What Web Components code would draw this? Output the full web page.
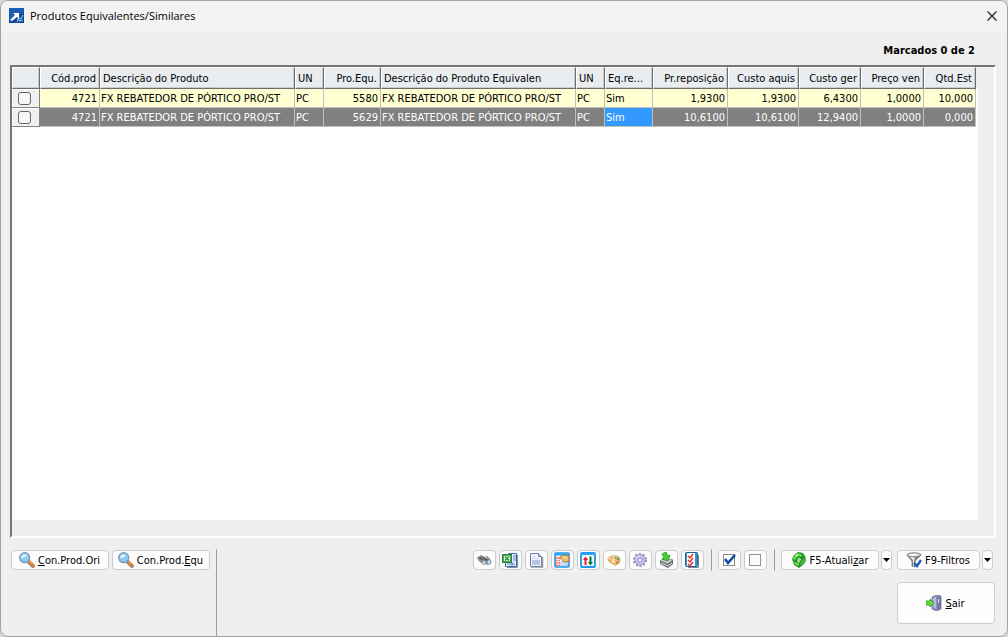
<!DOCTYPE html>
<html lang="pt-BR">
<head>
<meta charset="utf-8">
<title>Produtos Equivalentes/Similares</title>
<style>
html, body { height: 100%; }
body { margin: 0; background: #d6d6d6; font: 11px/14px "DejaVu Sans Condensed", "Noto Sans", sans-serif; color: #000; }
</style>
</head>
<body>
<app-window caption="Produtos Equivalentes/Similares">
  <marked-count slot="status">Marcados 0 de 2</marked-count>
  <product-grid></product-grid>
  <action-bar slot="footer"></action-bar>
</app-window>

<script>
const define = (name, html, setup, observed = []) => {
  const template = document.createElement('template');
  template.innerHTML = html;
  customElements.define(name, class extends HTMLElement {
    static observedAttributes = observed;
    constructor() {
      super();
      this.attachShadow({ mode: 'open' }).append(template.content.cloneNode(true));
    }
    connectedCallback() { if (setup) setup(this, this.shadowRoot); }
    attributeChangedCallback() { setup(this, this.shadowRoot); }
  });
};

const icons = {
  app: `<path d="M0 0h15v15H0z" fill="#0d4a9c"/><path d="M0 0h15v4L0 12z" fill="#1a5cb4"/><path d="M1 12l5-5-2-2h6v6l-2-2-5 4z" fill="#fff"/><path d="M8 14l2-4 2 1 2-4M10 13l4-1M8 11l4 2" stroke="#9cc4ee" fill="none"/>`,
  close: `<path d="M3.500 3.500l9 9M12.500 3.500l-9 9" stroke="#222" stroke-width="1.2" fill="none"/>`,
  lens: `<path d="M10 10l4 4" stroke="#9a8c88" stroke-width="4" stroke-linecap="round"/><path d="M10 9.500l4 4" stroke="#ee7a1c" stroke-width="2.400" stroke-linecap="round"/><path d="M10.500 9l3 3" stroke="#ffc070" stroke-width="1"/><circle cx="5.700" cy="5.700" r="5" fill="#8ccbee" stroke="#7795b8" stroke-width="1.200"/><path d="M2 6a4 4 0 0 1 6-3c-1 2-3 3-6 3z" fill="#dff4ff"/>`,
  binoculars: `<path d="M1 5l4-2 3 2 3-1 4 4v3l-4 2-3-3-3 1-3-3z" fill="#8b9094"/><path d="M3 5l4 3M8 6l4 3" stroke="#4b4b4b" stroke-width="1.400"/><path d="M6 4l2 2 3-1" stroke="#555" fill="none"/><ellipse cx="8" cy="10.500" rx="2" ry="1.900" fill="#bfe0f6" stroke="#71808c" stroke-width=".8"/><ellipse cx="13" cy="10" rx="2" ry="2.200" fill="#bfe0f6" stroke="#71808c" stroke-width=".8"/><path d="M2 5l2-1M9 6l2-1" stroke="#e8e8e8"/>`,
  excel: `<path d="M6.500 1.500h8v13h-11v-4" fill="#e6effa" stroke="#4669a5"/><path d="M11 4h3M11 6h3M11 8h3M5 12h8M10 10v4" stroke="#5c85bd"/><rect x=".5" y="2.500" width="9" height="8" fill="#4aa556" stroke="#2b8538"/><rect x="2" y="4" width="6" height="5" fill="#f0faec"/><path d="M3 4.500l4 4M7 4.500l-4 4" stroke="#2c9747" stroke-width="1.600"/><path d="M15.500 3v12.500H5" fill="none" stroke="#7d8fac"/>`,
  page: `<path d="M3 15h11.500V5" fill="none" stroke="#999" stroke-width="1.500"/><path d="M2.500 1.500h8l3 3v10h-11z" fill="#f2f5fb" stroke="#7182a8"/><path d="M10.500 1.500v3h3" fill="#bfcce6" stroke="#7182a8"/><path d="M4 4.500h4M4 6.500h7" stroke="#d0d8ec"/><rect x="4" y="8" width="8" height="5" fill="#b7c4e4"/>`,
  calendar: `<rect x="1" y="1" width="14" height="14" rx="1" fill="#eaf6ff" stroke="#1c95ea" stroke-width="1.600"/><path d="M1 2.500h14" stroke="#25a5ff" stroke-width="2"/><path d="M2 5h4v9H2z" fill="#ff7a52"/><path d="M6 9h8v5H6z" fill="#a9c1dc"/><path d="M2 7.500h4M2 9.500h12M2 12h12M4 5v9M7 10v4M10 10v4" stroke="#fff" stroke-width=".7"/><path d="M6 5l3-2 6 1v5l-4 1-2-1-2-2z" fill="#efbd6e" stroke="#b3742b" stroke-width=".9"/><path d="M9 5l4 1" stroke="#ffe9b5"/>`,
  sort: `<rect x="1" y="1" width="14" height="14" rx="1" fill="#f4fbff" stroke="#1c95ea" stroke-width="1.800"/><path d="M1 2h14" stroke="#25a5ff" stroke-width="2"/><path d="M5.500 13V6" stroke="#ed1b24" stroke-width="2"/><path d="M3 8l2.500-3.500L8 8z" fill="#ed1b24"/><path d="M10.500 4.500V11" stroke="#08752f" stroke-width="2"/><path d="M8 10l2.500 3.500L13 10z" fill="#08752f"/>`,
  palette: `<path d="M2 8c-1-4 5-5 9-4 4 1 4 6 1 8-3 2-4 1-5 0-1-1-4-1-5-4z" fill="#ecb968" stroke="#d2a25f" stroke-width=".7"/><path d="M2 7c2-4 6-3 8-3L8 8z" fill="#ffe3a5"/><circle cx="5.500" cy="6" r="1.200" fill="#e88d76"/><circle cx="9" cy="5.500" r="1" fill="#719bd6"/><circle cx="12" cy="7" r="1.400" fill="#4eb440"/><path d="M6 9l3 1" stroke="#fff6da" stroke-width="1.400"/><path d="M10 11l3-1" stroke="#dc6a3d" stroke-width="1.500"/>`,
  gear: `<circle cx="8" cy="8" r="6" fill="none" stroke="#9494c6" stroke-width="2.200" stroke-dasharray="2.200 1.570"/><circle cx="8" cy="8" r="5" fill="#c6c6e8" stroke="#9a9acb"/><circle cx="8" cy="8" r="2" fill="#fff" stroke="#8787ba"/><path d="M4 7a4 4 0 0 1 4-3" stroke="#ececff" fill="none"/>`,
  print: `<path d="M2 9l4-3 9 2v4l-5 4-8-4z" fill="#666"/><path d="M2 9l4-3 9 2-5 4z" fill="#c9c9c9" stroke="#777" stroke-width=".7"/><path d="M3 11l7 3 4-3" stroke="#eee" fill="none"/><path d="M4 2l4-2 2 4 2-1-2 6-6-2 2-1z" fill="#44cf35" stroke="#249a29" stroke-width=".8"/>`,
  checklist: `<path d="M4 15.500h10.500V3" fill="none" stroke="#888"/><rect x="1.500" y=".5" width="12" height="14" rx="1" fill="#3794cf" stroke="#176398"/><rect x="3" y="1" width="8" height="13" fill="#fff"/><path d="M4 4l2 2 3-4M4 8l2 2 3-4M4 12l2 2 3-4" fill="none" stroke="#d92d25" stroke-width="1.400"/>`,
  checked: `<rect x="2.500" y="2.500" width="11" height="11" fill="#fff" stroke="#888"/><path d="M4 7l3 4 7-8" stroke="#0b47a8" stroke-width="2.500" fill="none"/>`,
  unchecked: `<rect x="2.500" y="2.500" width="11" height="11" fill="#fafafa" stroke="#929292"/>`,
  recycle: `<path d="M3 3l4-3 5 1 2 3 1 4-2 4-5 4-5-3-2-6z" fill="#228f27"/><path d="M3 4l4-3 5 2-2 2-3-1-3 4-3-1z" fill="#59d743"/><path d="M14 5l1 4-4 5-2-2 3-5z" fill="#41b737"/><path d="M2 9l2 1 4 1v3l-4-1z" fill="#63cd51"/><path d="M6 8l2-3 3 2-1 3-3 1z" fill="#a7d99a"/><path d="M8 5l3 2-2 3" stroke="#217c2b" fill="none"/><path d="M5 2l3 1-4 2z" fill="#c7f7b2"/>`,
  funnel: `<path d="M1 3l5 6v5l3 1V9l6-6z" fill="#8f8f8f" stroke="#696969" stroke-width=".8"/><path d="M3 4l4 4v6h1V8l1-4z" fill="#efefef"/><ellipse cx="8" cy="2.800" rx="7" ry="2" fill="#ddd" stroke="#666" stroke-width=".8"/><ellipse cx="7" cy="3" rx="4" ry="1" fill="#fff"/><path d="M8 11l3 3 4-6" stroke="#2263b7" stroke-width="2.500" fill="none"/>`,
  exit: `<path d="M6 2l5-2 4 1v13l-4 2-5-2z" fill="#8e95bd" stroke="#656d96" stroke-width=".8"/><path d="M11 2v13l4-2V1z" fill="#71779f"/><path d="M7 3l3-1v11l-3-1z" fill="#b5bddb"/><path d="M12 4h1v4h-1z" fill="#e5ebff"/><path d="M0 6h4V4l4 4-4 4v-2H0z" fill="#66dc43" stroke="#2b9c25" stroke-width=".9"/>`
};

define('ui-icon', `
<style>
:host { display: block; width: 16px; height: 16px; flex: none; }
svg { display: block; width: 100%; height: 100%; }
</style>
<svg viewBox="0 0 16 16" aria-hidden="true"></svg>`,
(host, root) => { root.querySelector('svg').innerHTML = icons[host.getAttribute('name')] || ''; }, ['name']);

define('tool-button', `
<style>
:host { display: flex; height: 20px; }
button { flex: 1; display: flex; align-items: center; justify-content: center; gap: 3px; margin: 0; padding: 0 1px 0 0;
  border: 1px solid #ccc; border-radius: 4px; background: #fdfdfd; color: #000; font: inherit; white-space: nowrap; }
::slotted(span) { padding-top: 2px; }
:host([kind="tool"]) { width: 23px; }
:host([kind="action"]) { width: 98px; }
:host([kind="filter"]) { width: 83px; }
:host([kind="exit"]) { width: 98px; height: 42px; }
</style>
<button type="button"><ui-icon></ui-icon><slot></slot></button>`,
(host, root) => {
  root.querySelector('ui-icon').setAttribute('name', host.getAttribute('icon'));
  const name = host.getAttribute('label');
  if (name) {
    root.querySelector('button').setAttribute('aria-label', name);
    root.querySelector('slot').remove();
  }
});

define('menu-button', `
<style>
:host { display: flex; width: 11px; height: 20px; }
button { flex: 1; display: flex; align-items: center; justify-content: center; margin: 0; padding: 0;
  border: 1px solid #ccc; border-radius: 4px; background: #fdfdfd; }
svg { display: block; flex: none; width: 7px; height: 4px; }
</style>
<button type="button" aria-label="Mais opções"><svg viewBox="0 0 7 4"><path d="M0 0h7L3.500 4z"/></svg></button>`);

define('app-window', `
<style>
:host { box-sizing: border-box; display: flex; flex-direction: column; min-height: 100vh;
  border: 1px solid #a3a3a3; border-radius: 8px; background: #efefef; overflow: hidden; }
header { display: flex; align-items: center; justify-content: space-between; height: 30px; padding: 0 7px 0 8px; background: #f3f3f3; }
h1 { display: flex; align-items: center; gap: 5px; margin: 0; font: 11px/16px "Open Sans", "Noto Sans", sans-serif; }
button { margin: 0; padding: 0; border: 0; background: none; }
.status { display: flex; justify-content: flex-end; align-items: center; height: 34px; padding: 5px 32px 0 8px; box-sizing: border-box; }
main { flex: 1; display: flex; padding: 0 11px 0 9px; }
</style>
<header><h1><ui-icon name="app"></ui-icon><span></span></h1>
<button type="button" aria-label="Fechar"><ui-icon name="close"></ui-icon></button></header>
<div class="status"><slot name="status"></slot></div>
<main><slot></slot></main>
<slot name="footer"></slot>`,
(host, root) => { root.querySelector('span').textContent = host.getAttribute('caption'); });

define('marked-count', `
<style>:host { display: block; font: bold 11px/14px "DejaVu Sans Condensed", "Noto Sans", sans-serif; }</style>
<slot></slot>`);

const columns = [
  ['', 28], ['Cód.prod', 60, 'n'], ['Descrição do Produto', 195], ['UN', 29], ['Pro.Equ.', 57, 'n'],
  ['Descrição do Produto Equivalen', 195], ['UN', 29], ['Eq.re...', 48], ['Pr.reposição', 75, 'n'],
  ['Custo aquis', 71, 'n'], ['Custo ger', 62, 'n'], ['Preço ven', 63, 'n'], ['Qtd.Est', 52, 'n']
];
const rows = [
  ['4721', 'FX REBATEDOR DE PÓRTICO PRO/ST', 'PC', '5580', 'FX REBATEDOR DE PÓRTICO PRO/ST', 'PC', 'Sim', '1,9300', '1,9300', '6,4300', '1,0000', '10,000'],
  ['4721', 'FX REBATEDOR DE PÓRTICO PRO/ST', 'PC', '5629', 'FX REBATEDOR DE PÓRTICO PRO/ST', 'PC', 'Sim', '10,6100', '10,6100', '12,9400', '1,0000', '0,000']
];

define('product-grid', `
<style>
:host { flex: 1; display: flex; min-width: 0; border: 2px solid; border-color: #747474 #fff #fff #747474; background: #efefef; padding: 0 16px 16px 0; }
.sheet { flex: 1; min-width: 0; background: linear-gradient(#efefef 22px, #fff 22px); }
table { table-layout: fixed; width: 964px; border-spacing: 0; border-collapse: separate; }
th, td { box-sizing: border-box; overflow: hidden; white-space: nowrap; text-align: left; font-weight: normal; line-height: 14px; }
th { height: 22px; padding: 2px 3px 0 2px; background: #e9edf0; border: 1px solid #6d6d6d; border-top-color: #fff; border-left-color: #fff; box-shadow: inset -1px -1px #c9cccf; }
td { height: 19px; padding: 2px 2px 0 1px; border-right: 1px solid #c0c0c0; border-bottom: 1px solid #c0c0c0; background: #ffffd2; }
.n { text-align: right; }
tr.selected td { background: #808080; color: #fff; }
tr.selected td.focus { background: #3399ff; }
tbody tr td:first-child { padding: 0 2px 0 0; background: #f0f0f0; border-color: #858585; box-shadow: inset 1px 1px #fff; }
input { appearance: none; display: block; box-sizing: border-box; width: 13px; height: 13px; margin: 0 auto; border: 1px solid #666; border-radius: 3px; background: #f8f8f8; }
</style>
<div class="sheet"><table><colgroup></colgroup><thead><tr></tr></thead><tbody></tbody></table></div>`,
(host, root) => {
  const cls = i => columns[i][2] ? ' class="n"' : '';
  root.querySelector('colgroup').innerHTML = columns.map(c => `<col style="width:${c[1]}px">`).join('');
  root.querySelector('thead tr').innerHTML = columns.map((c, i) => `<th scope="col"${cls(i)}>${c[0]}</th>`).join('');
  root.querySelector('tbody').innerHTML = rows.map((r, n) =>
    `<tr${n ? ' class="selected"' : ''}><td><input type="checkbox" aria-label="Marcar ${r[3]}"></td>` +
    r.map((v, i) => `<td${n && i === 6 ? ' class="focus"' : cls(i + 1)}>${v}</td>`).join('') + '</tr>').join('');
});

define('action-bar', `
<style>
:host { display: flex; justify-content: space-between; height: 98px; padding-top: 11px; box-sizing: border-box; }
.origin { display: flex; align-items: flex-start; gap: 3px; padding: 1px 6px 0 10px; border-right: 1px solid #a0a0a0; }
.right { display: flex; flex-direction: column; align-items: flex-end; gap: 11px; padding-right: 12px; }
.tools { display: flex; align-items: center; gap: 6px; padding-right: 2px; height: 22px; }
.group { display: flex; gap: 3px; }
.split { display: flex; gap: 2px; }
.filters { display: flex; gap: 5px; }
.rule { width: 1px; height: 22px; margin-left: 1px; background: #a0a0a0; }
</style>
<div class="origin">
  <tool-button kind="action" icon="lens"><span><u>C</u>on.Prod.Ori</span></tool-button>
  <tool-button kind="action" icon="lens"><span>Con.Prod.<u>E</u>qu</span></tool-button>
</div>
<div class="right">
  <div class="tools">
    <div class="group">
      <tool-button kind="tool" icon="binoculars" label="Localizar"></tool-button>
      <tool-button kind="tool" icon="excel" label="Exportar para Excel"></tool-button>
      <tool-button kind="tool" icon="page" label="Documento"></tool-button>
      <tool-button kind="tool" icon="calendar" label="Configurar colunas"></tool-button>
      <tool-button kind="tool" icon="sort" label="Ordenar"></tool-button>
      <tool-button kind="tool" icon="palette" label="Cores"></tool-button>
      <tool-button kind="tool" icon="gear" label="Configurações"></tool-button>
      <tool-button kind="tool" icon="print" label="Imprimir"></tool-button>
      <tool-button kind="tool" icon="checklist" label="Seleção"></tool-button>
    </div>
    <div class="rule"></div>
    <div class="group">
      <tool-button kind="tool" icon="checked" label="Marcar todos"></tool-button>
      <tool-button kind="tool" icon="unchecked" label="Desmarcar todos"></tool-button>
    </div>
    <div class="rule"></div>
    <div class="filters">
      <div class="split"><tool-button kind="action" icon="recycle"><span>F5-Atuali<u>z</u>ar</span></tool-button><menu-button></menu-button></div>
      <div class="split"><tool-button kind="filter" icon="funnel"><span>F9-Filtros</span></tool-button><menu-button></menu-button></div>
    </div>
  </div>
  <tool-button kind="exit" icon="exit"><span><u>S</u>air</span></tool-button>
</div>`);
</script>
</body>
</html>
